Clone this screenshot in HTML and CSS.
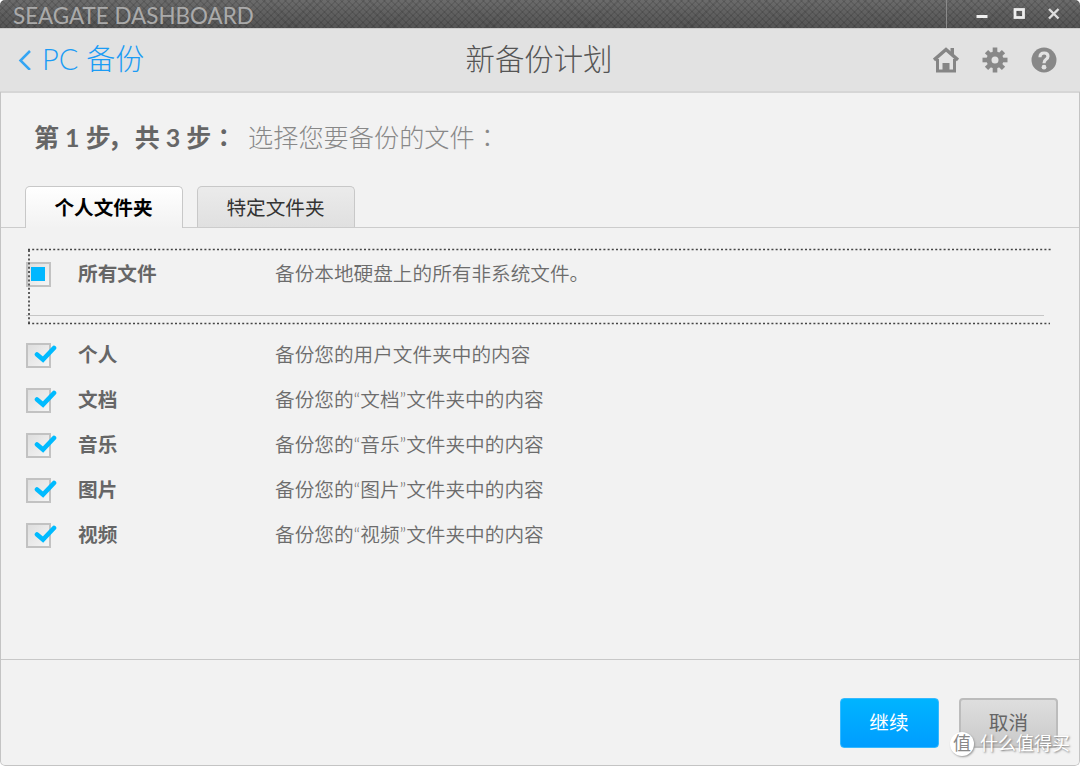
FILE: index.html
```html
<!DOCTYPE html>
<html lang="zh-CN">
<head>
    <meta charset="UTF-8">
    <title>Seagate Dashboard</title>
    <link rel="stylesheet" href="styles.css">
</head>
<body>
    <div class="window">
        <div class="titlebar">
            <span class="app-name">SEAGATE DASHBOARD</span>
            <div class="window-controls">
                <svg width="133" height="28" viewBox="0 0 133 28">
                    <path d="M30.500 16.500h11" stroke="#eee" stroke-width="3"/>
                    <rect x="69" y="9.500" width="8.500" height="8" fill="none" stroke="#eee" stroke-width="2.800"/>
                    <path d="M103 9l9.500 9.500M112.500 9l-9.500 9.500" stroke="#ddd" stroke-width="2.400"/>
                </svg>
            </div>
        </div>

        <div class="header">
            <a class="back">
                <svg width="14" height="22" viewBox="0 0 14 22"><path d="M12 3L2.500 12.500L12 22" fill="none" stroke="#35a5f3" stroke-width="2.500"/></svg>
                <span>PC 备份</span>
            </a>
            <h1>新备份计划</h1>
            <div class="tools">
                <svg width="26" height="26" viewBox="0 0 26 26">
                    <path d="M1 13L13 2.500L25 13" fill="none" stroke="#858585" stroke-width="3.400"/>
                    <path d="M17.500 1h3.500v7l-3.500-3z" fill="#858585"/>
                    <path d="M4.500 12v12h17V12" fill="none" stroke="#858585" stroke-width="3"/>
                    <path d="M9.500 16h7v9h-7z" fill="#858585"/>
                </svg>
                <svg width="26" height="26" viewBox="-13 -13 26 26">
                    <g stroke="#888" stroke-width="4.600">
                        <path d="M0 -12.500V12.500"/>
                        <path d="M0 -12V12" transform="rotate(45)"/>
                        <path d="M0 -12.500V12.500" transform="rotate(90)"/>
                        <path d="M0 -12V12" transform="rotate(135)"/>
                    </g>
                    <circle r="6" fill="#e2e2e2" stroke="#888" stroke-width="5"/>
                </svg>
                <svg width="26" height="26" viewBox="0 0 26 26">
                    <circle cx="13" cy="13" r="12.500" fill="#888"/>
                    <path d="M9 10.300Q9 6 13.200 6Q17 6 17 9.300Q17 11.300 14.800 12.600Q13 13.700 13 16.300" fill="none" stroke="#e2e2e2" stroke-width="3.200"/>
                    <circle cx="13" cy="20.200" r="2.400" fill="#e2e2e2"/>
                </svg>
            </div>
        </div>

        <div class="step">
            <strong>第 1 步<i class="comma" lang="ja">，</i>共 3 步<i lang="ja">：</i></strong>
            <span>选择您要备份的文件<i lang="ja">：</i></span>
        </div>

        <div class="tabs">
            <div class="tab active">个人文件夹</div>
            <div class="tab">特定文件夹</div>
        </div>

        <div class="content">
            <div class="row all">
                <span class="checkbox partial"></span>
                <span class="name">所有文件</span>
                <span class="desc">备份本地硬盘上的所有非系统文件。</span>
                <svg class="focus" width="1024" height="77" viewBox="0 0 1024 77">
                    <path d="M1 1.500H1024M2 2V75M1 75.500H1023" fill="none" stroke="#444" stroke-width="1.700" stroke-dasharray="2 2.200"/>
                </svg>
            </div>
            <div class="row">
                <span class="checkbox"><svg width="24" height="20" viewBox="0 0 24 20"><path d="M3 10.500L9 15.500L20 4" /></svg></span>
                <span class="name">个人</span>
                <span class="desc">备份您的用户文件夹中的内容</span>
            </div>
            <div class="row">
                <span class="checkbox"><svg width="24" height="20" viewBox="0 0 24 20"><path d="M3 10.500L9 15.500L20 4" /></svg></span>
                <span class="name">文档</span>
                <span class="desc">备份您的“文档”文件夹中的内容</span>
            </div>
            <div class="row">
                <span class="checkbox"><svg width="24" height="20" viewBox="0 0 24 20"><path d="M3 10.500L9 15.500L20 4" /></svg></span>
                <span class="name">音乐</span>
                <span class="desc">备份您的“音乐”文件夹中的内容</span>
            </div>
            <div class="row">
                <span class="checkbox"><svg width="24" height="20" viewBox="0 0 24 20"><path d="M3 10.500L9 15.500L20 4" /></svg></span>
                <span class="name">图片</span>
                <span class="desc">备份您的“图片”文件夹中的内容</span>
            </div>
            <div class="row">
                <span class="checkbox"><svg width="24" height="20" viewBox="0 0 24 20"><path d="M3 10.500L9 15.500L20 4" /></svg></span>
                <span class="name">视频</span>
                <span class="desc">备份您的“视频”文件夹中的内容</span>
            </div>
        </div>

        <div class="footer">
            <button class="primary">继续</button>
            <button>取消</button>
        </div>

        <div class="watermark">
            <span class="badge">值</span>
            <span>什么值得买</span>
        </div>
    </div>
</body>
</html>
```
FILE: styles.css
```css
* {
    box-sizing: border-box;
}
body {
    margin: 0;
    background-color: #fff;
    font-family: Lato, "Noto Sans CJK SC", sans-serif;
    font-size: 19.65px;
    color: #666;
}
.window {
    position: relative;
    display: flex;
    flex-direction: column;
    width: 1080px;
    height: 766px;
    overflow: hidden;
    background-color: #f2f2f2;
    border-radius: 5px;
}
/* grey frame drawn over the edges below the header */
.window::after {
    content: "";
    position: absolute;
    inset: 92px 0 0 0;
    border: 1px solid #c4c4c4;
    border-top: 0;
    border-radius: 0 0 5px 5px;
}
.titlebar {
    display: flex;
    justify-content: space-between;
    height: 28px;
    background:
        repeating-linear-gradient(45deg, rgba(0, 0, 0, 0.1) 0 1.5px, transparent 1.5px 5px),
        repeating-linear-gradient(-45deg, rgba(0, 0, 0, 0.1) 0 1.5px, transparent 1.5px 5px),
        linear-gradient(#6b6b6b, #545454);
}
.app-name {
    padding-left: 13px;
    font-size: 22.4px;
    line-height: 31px;
    color: #aaa;
}
.window-controls {
    width: 134px;
    border-left: 1px solid #8a8a8a;
}
.window-controls svg {
    display: block;
    margin-left: -1px;
}
.header {
    display: grid;
    grid-template-columns: 1fr auto 1fr;
    align-items: center;
    height: 65px;
    padding: 0 23px 3px 18px;
    background-color: #e2e2e2;
    border-top: 1px solid #ccc;
    border-bottom: 2px solid #d6d6d6;
}
.back {
    display: flex;
    align-items: center;
    gap: 10px;
    font-size: 29px;
    font-weight: 300;
    line-height: 42px;
    color: #1b9cf5;
}
.header h1 {
    margin: 0 0 0 3px;
    font-size: 29.4px;
    font-weight: 300;
    line-height: 44px;
    color: #555;
}
.tools {
    display: flex;
    justify-content: flex-end;
    gap: 23px;
    padding-top: 2px;
}
.step {
    display: flex;
    gap: 11px;
    height: 93px;
    padding: 0 34px;
    font-size: 25.2px;
    line-height: 86px;
}
.step strong {
    width: 203px;
    font-weight: 700;
    font-size: 25px;
    white-space: nowrap;
}
.step span {
    font-weight: 300;
    color: #888;
}
/* centred colon, comma close to the character before it */
.step i {
    font-family: "Noto Sans CJK JP", sans-serif;
    font-style: normal;
}
.step .comma {
    margin: 0 2px 0 -3px;
}
.tabs {
    display: flex;
    gap: 14px;
    height: 42px;
    padding-left: 24.5px;
    border-bottom: 1px solid #ccc;
}
.tab {
    width: 158px;
    height: 41px;
    border: 1px solid #c8c8c8;
    border-bottom: 0;
    border-radius: 5px 5px 0 0;
    background: linear-gradient(#ebebeb, #e0e0e0);
    text-align: center;
    line-height: 41px;
    color: #333;
}
.tab.active {
    height: 42px;
    background: linear-gradient(#fff, #f2f2f2);
    font-weight: 700;
    color: #000;
}
.content {
    height: 431px;
    padding: 20px 36px 0 26px;
}
.row {
    display: flex;
    align-items: center;
    height: 45px;
}
.row.all {
    position: relative;
    align-items: flex-start;
    height: 68px;
    margin-bottom: 17px;
    padding-top: 14px;
    border-bottom: 1px solid #c6c6c6;
}
.focus {
    position: absolute;
    top: 0;
    left: 1px;
}
.checkbox {
    position: relative;
    width: 25px;
    height: 25px;
    margin-right: 27px;
    border: 2px solid #c2c2c2;
    background: linear-gradient(135deg, #dedede, #f5f5f5);
}
.checkbox svg {
    position: absolute;
    top: -1px;
    left: 6px;
}
.checkbox path {
    fill: none;
    stroke: #0bf;
    stroke-width: 4.6;
    stroke-linecap: round;
}
.partial::before {
    content: "";
    display: block;
    width: 14px;
    height: 14px;
    margin: 3px;
    background-color: #00b7ff;
}
.name,
.desc {
    height: 26px;
    line-height: 24px;
}
.name {
    width: 197px;
    font-weight: 700;
}
.desc {
    font-weight: 350;
    color: #6c6c6c;
}
.footer {
    flex: 1;
    display: flex;
    justify-content: flex-end;
    gap: 20.5px;
    padding: 38px 22px 0 0;
    border-top: 1px solid #c8c8c8;
}
button {
    width: 99px;
    height: 50px;
    padding: 0 0 3px;
    border: 2px solid #bcbcbc;
    border-radius: 4px;
    background: linear-gradient(#dedede, #cacaca);
    font: inherit;
    color: #666;
}
button.primary {
    border: 1px solid #35b9ff;
    background: linear-gradient(#00b4ff, #009dff);
    color: #fff;
}
.watermark {
    position: absolute;
    right: 10px;
    bottom: 10px;
    display: flex;
    align-items: center;
    gap: 6px;
    font-size: 18px;
    line-height: 25px;
    color: #fff;
    text-shadow: 1px 1px 2px #777;
}
.badge {
    width: 24px;
    height: 24px;
    border-radius: 50%;
    background-color: #fff;
    box-shadow: 1px 1px 2px #999;
    text-align: center;
    line-height: 23px;
    color: #888;
    text-shadow: none;
}
```
